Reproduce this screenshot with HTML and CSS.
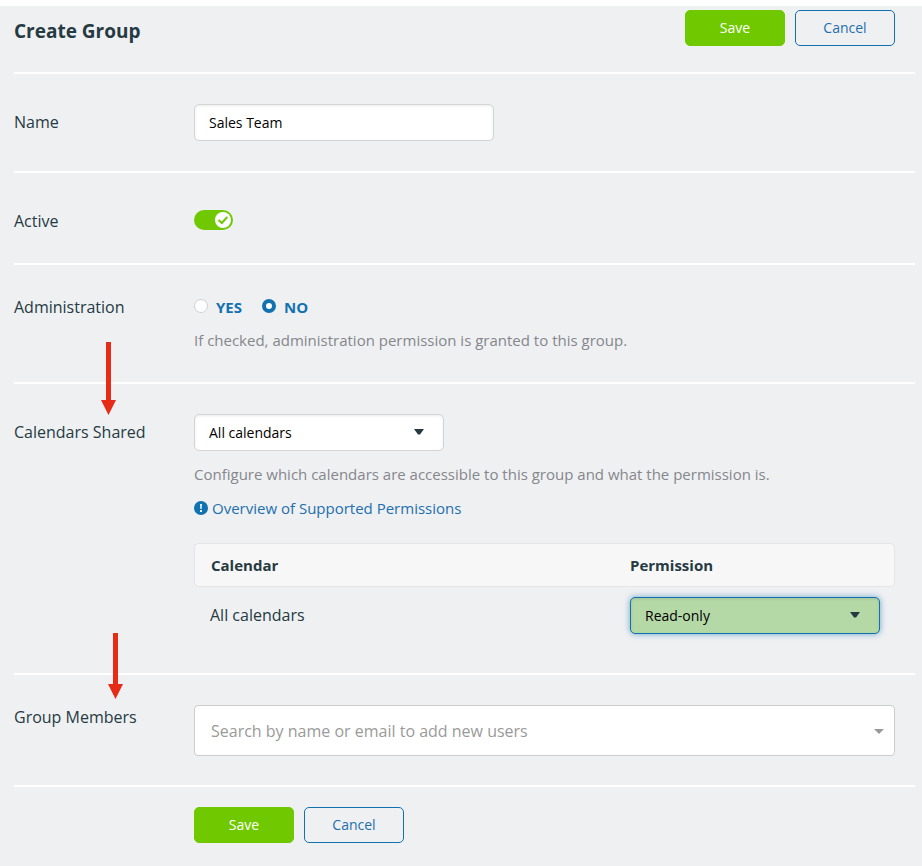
FILE: index.html
```html
<!DOCTYPE html>
<html lang="en">
<head>
<meta charset="utf-8">
<title>Create Group</title>
<link rel="stylesheet" href="styles.css">
</head>
<body>
<form class="page">
  <header class="page-header">
    <h1>Create Group</h1>
    <div class="actions">
      <button type="button" class="btn btn-save">Save</button>
      <button type="button" class="btn btn-cancel">Cancel</button>
    </div>
  </header>

  <section class="row">
    <label class="row-label" for="name">Name</label>
    <div class="row-body"><input class="control name-input" id="name" type="text" value="Sales Team"></div>
  </section>

  <section class="row row-toggle">
    <label class="row-label" for="active">Active</label>
    <div class="row-body">
      <span class="toggle">
        <input id="active" type="checkbox" checked>
        <svg class="knob" viewBox="0 0 16 16" aria-hidden="true"><circle cx="8" cy="8" r="8" fill="#fff"/><path d="M3.500 8 6.800 11 12.300 5" fill="none" stroke="#70c900" stroke-width="2"/></svg>
      </span>
    </div>
  </section>

  <section class="row" role="radiogroup" aria-labelledby="admin-label">
    <span class="row-label row-label-text" id="admin-label">Administration</span>
    <div class="row-body">
      <div class="radios">
        <label class="radio"><input type="radio" name="admin">YES</label>
        <label class="radio"><input type="radio" name="admin" checked>NO</label>
      </div>
      <p class="hint hint-radio">If checked, administration permission is granted to this group.</p>
    </div>
  </section>

  <section class="row">
    <label class="row-label" for="calendars">Calendars Shared
      <svg class="arrow arrow-tall" viewBox="0 0 15 73" aria-hidden="true"><path d="M5 0h5v58h5l-7.500 15L0 58h5z" fill="#e62b17"/></svg>
    </label>
    <div class="row-body">
      <div class="select-wrap">
        <select class="control" id="calendars"><option>All calendars</option></select>
        <svg class="caret" viewBox="0 0 10 6" aria-hidden="true"><path d="M0 0h10L6 5.500H4z" fill="#263a42"/></svg>
      </div>
      <p class="hint">Configure which calendars are accessible to this group and what the permission is.</p>
      <a class="help" href="#permissions"><svg class="help-icon" viewBox="0 0 14 14" aria-hidden="true"><circle cx="7" cy="7" r="7" fill="#1272b0"/><path d="M6 3h2L7.700 8H6.300zM6 9h2v2H6z" fill="#e5f2fb"/></svg>Overview of Supported Permissions</a>
      <table class="permissions">
        <thead><tr><th>Calendar</th><th class="permission-col">Permission</th></tr></thead>
        <tbody><tr>
          <td class="calendar-name">All calendars</td>
          <td class="permission-col"><div class="select-wrap">
            <select class="control control-focus" aria-label="Permission for all calendars"><option>Read-only</option></select>
            <svg class="caret" viewBox="0 0 10 6" aria-hidden="true"><path d="M0 0h10L6 5.500H4z" fill="#263a42"/></svg>
          </div></td>
        </tr></tbody>
      </table>
    </div>
  </section>

  <section class="row row-members">
    <label class="row-label" for="members">Group Members
      <svg class="arrow arrow-short" viewBox="0 0 15 66" aria-hidden="true"><path d="M5 0h5v51h5l-7.500 15L0 51h5z" fill="#e62b17"/></svg>
    </label>
    <div class="row-body">
      <div class="search-wrap">
        <input class="search" id="members" type="text" placeholder="Search by name or email to add new users">
        <svg class="caret search-caret" viewBox="0 0 10 5" aria-hidden="true"><path d="M0 0h10L5 5z" fill="#999"/></svg>
      </div>
    </div>
  </section>

  <footer class="actions page-footer">
    <button type="button" class="btn btn-save">Save</button>
    <button type="button" class="btn btn-cancel">Cancel</button>
  </footer>
</form>
</body>
</html>
```
FILE: styles.css
```css
* { box-sizing: border-box; }
html { background: #eff0f2; }
body {
  margin: 0;
  border-top: 6px solid #fff;
  font: 16px/24px "Open Sans", "Noto Sans", sans-serif;
  color: #263a42;
}
.page { padding: 0 7px 20px 14px; }
.page-header {
  display: flex;
  justify-content: space-between;
  align-items: flex-start;
  padding: 4px 20px 26px 0;
  border-bottom: 2px solid #fff;
}
h1 { margin: 8px 0 0; font-size: 19px; line-height: 26px; font-weight: 700; }
.actions { display: flex; gap: 10px; }
.btn {
  width: 100px;
  height: 36px;
  padding: 0;
  border: 1px solid #1272b0;
  border-radius: 5px;
  font: 14px/20px "Open Sans", sans-serif;
}
.btn-save { background: #70c900; border-color: #70c900; color: #fff; }
.btn-cancel { background: transparent; color: #1d6fae; }

.row {
  display: grid;
  grid-template-columns: 180px minmax(0, 1fr);
  padding: 30px 20px 30px 0;
  border-bottom: 2px solid #fff;
}
.row-label { position: relative; padding-top: 6px; align-self: start; }
.row-label-text { padding-top: 0; }

.control {
  display: block;
  width: 250px;
  height: 37px;
  padding: 0 14px;
  border: 1px solid #d2d4d6;
  border-radius: 5px;
  background: #fff;
  box-shadow: inset 0 1px 3px rgba(0, 0, 0, .08);
  font: 14px/20px "Open Sans", sans-serif;
  color: #000;
  appearance: none;
}
.name-input { width: 300px; }
.select-wrap { position: relative; width: 250px; }
.caret { position: absolute; right: 20px; top: 15px; width: 10px; height: 6px; pointer-events: none; }

.row-toggle .row-body { padding: 7px 0 3px; }
.toggle { display: block; position: relative; width: 39px; height: 20px; }
.toggle input {
  display: block;
  width: 100%;
  height: 100%;
  margin: 0;
  border-radius: 10px;
  background: #70c900;
  appearance: none;
}
.knob { position: absolute; top: 2px; right: 2px; width: 16px; height: 16px; pointer-events: none; }

.radios { display: flex; gap: 20px; }
.radio { display: flex; gap: 8px; font-size: 15px; font-weight: 700; color: #1272b0; }
.radio input {
  width: 14px;
  height: 14px;
  margin: 4px 0 0;
  border: 1px solid #cfd1d3;
  border-radius: 50%;
  background: #fff;
  appearance: none;
}
.radio input:checked { border: 4px solid #1272b0; }

.hint { margin: 11px 0 0; font-size: 15px; line-height: 24px; color: #85878c; }
.hint-radio { margin: 9px 0 0; }
.help {
  display: flex;
  align-items: center;
  gap: 4px;
  margin-top: 10px;
  font-size: 15px;
  color: #1d6fae;
  text-decoration: none;
}
.help-icon { width: 14px; height: 14px; }

.permissions { width: 100%; margin-top: 23px; border-collapse: separate; border-spacing: 0; }
.permissions th {
  height: 44px;
  padding: 0 16px;
  border: 1px solid #e4e5e7;
  border-right: 0;
  border-radius: 5px 0 0 5px;
  background: #f7f7f7;
  text-align: left;
  font-size: 15px;
}
.permissions th.permission-col { border-right: 1px solid #e4e5e7; border-left: 0; border-radius: 0 5px 5px 0; }
.permissions td { padding: 10px 16px 9px; }
.permissions .calendar-name { padding-bottom: 11px; }
.permissions .permission-col { width: 265px; padding-left: 0; padding-right: 0; }
.control-focus {
  border-color: #1272b0;
  background: #b5d8a7;
  box-shadow: inset 0 1px 3px rgba(0, 0, 0, .1), 0 0 6px rgba(18, 114, 176, .6);
}

.row-members { padding-bottom: 29px; }
.row-members .row-label { padding-top: 0; }
.search-wrap { position: relative; }
.search {
  display: block;
  width: 100%;
  height: 51px;
  padding: 0 16px;
  border: 1px solid #ccc;
  border-radius: 4px;
  background: #fff;
  font: 16px/24px "Open Sans", sans-serif;
}
.search::placeholder { color: #9a9a9a; opacity: 1; }
.search-caret { top: 24px; right: 11px; height: 5px; }

.arrow { position: absolute; width: 15px; pointer-events: none; }
.arrow-tall { left: 87px; bottom: 29px; height: 73px; }
.arrow-short { left: 94px; bottom: 30px; height: 66px; }

.page-footer { padding: 20px 0 0 180px; }
```
